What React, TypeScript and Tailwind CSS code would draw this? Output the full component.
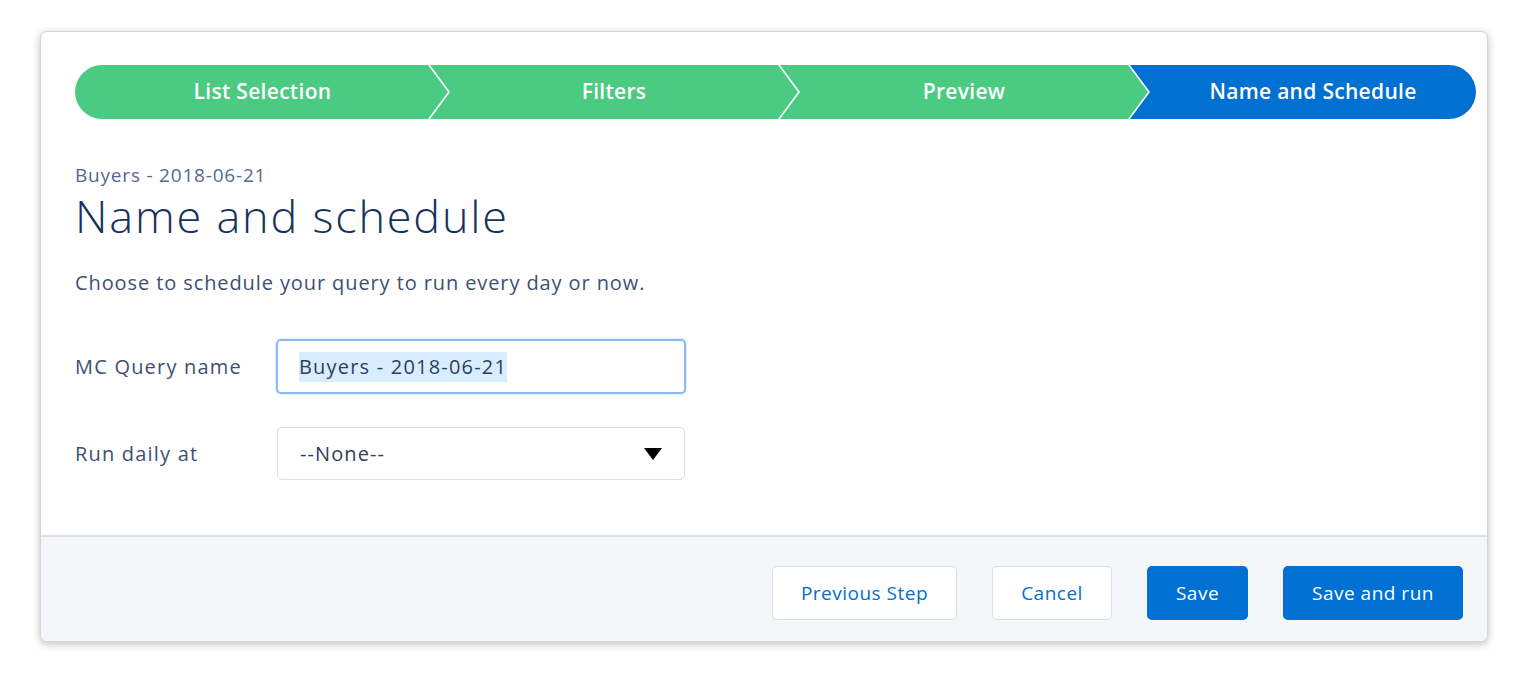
import React from "react";

const font = { fontFamily: '"Open Sans", "Noto Sans", sans-serif' };

function PathBar() {
  return (
    <div className="-mr-[23px] flex h-[54px]">
      <div className="flex h-full w-[373px] shrink-0 items-center justify-center rounded-l-[27px] bg-[#4bca81] pl-[22px] pr-[20px] text-[21px] font-semibold tracking-[0.3px] text-white [clip-path:polygon(0_0,calc(100%-20px)_0,100%_50%,calc(100%-20px)_100%,0_100%)]">
        List Selection
      </div>
      <div className="-ml-[18px] flex h-full w-[368px] shrink-0 items-center justify-center bg-[#4bca81] pl-[20px] pr-[20px] text-[21px] font-semibold tracking-[0.3px] text-white [clip-path:polygon(0_0,calc(100%-20px)_0,100%_50%,calc(100%-20px)_100%,0_100%,20px_50%)]">
        Filters
      </div>
      <div className="-ml-[18px] flex h-full w-[368px] shrink-0 items-center justify-center bg-[#4bca81] pl-[20px] pr-[20px] text-[21px] font-semibold tracking-[0.3px] text-white [clip-path:polygon(0_0,calc(100%-20px)_0,100%_50%,calc(100%-20px)_100%,0_100%,20px_50%)]">
        Preview
      </div>
      <div className="-ml-[18px] flex h-full flex-1 items-center justify-center rounded-r-[27px] bg-[#0070d2] pl-[20px] text-[21px] font-semibold tracking-[0.3px] text-white [clip-path:polygon(0_0,100%_0,100%_100%,0_100%,20px_50%)]">
        Name and Schedule
      </div>
    </div>
  );
}

export default function App() {
  return (
    <div className="min-h-[673px] w-full bg-white pl-[40px] pt-[31px]" style={font}>
      <div className="flex h-[611px] w-[1448px] flex-col overflow-hidden rounded-[7px] border border-[#d4d4d4] bg-white shadow-[0_2px_8px_rgba(0,0,0,0.25)]">
        <div className="flex-1 px-[34px] pt-[33px]">
          <PathBar />
          <div className="mt-[44px] text-[19px] leading-[24px] tracking-[0.8px] text-[#54698d]">Buyers - 2018-06-21</div>
          <h1 className="mt-[4px] text-[45px] font-light leading-[50px] tracking-[1.8px] text-[#16325c]">Name and schedule</h1>
          <p className="mt-[29px] text-[20px] leading-[26px] tracking-[0.9px] text-[#3e5071]">
            Choose to schedule your query to run every day or now.
          </p>
          <div className="mt-[43px] flex items-center">
            <label className="w-[201px] text-[20px] tracking-[1.2px] text-[#3e5071]">MC Query name</label>
            <div className="flex h-[55px] w-[410px] items-center rounded-[5px] border-2 border-[#8db9f4] bg-white px-[21px] shadow-[0_0_2px_rgba(21,137,238,0.4)]">
              <span className="bg-[#d8edff] text-[20px] leading-[30px] tracking-[1.2px] text-[#2f3f5a]">Buyers - 2018-06-21</span>
            </div>
          </div>
          <div className="mt-[33px] flex items-center">
            <label className="w-[202px] text-[20px] tracking-[1.2px] text-[#3e5071]">Run daily at</label>
            <div className="flex h-[53px] w-[408px] items-center justify-between rounded-[5px] border border-[#d8dde6] bg-white pl-[22px] pr-[22px]">
              <span className="text-[20px] tracking-[1.1px] text-[#2f3f5a]">--None--</span>
              <svg width="18" height="12" viewBox="0 0 18 12">
                <path d="M0 0 L18 0 L9 12 Z" fill="#000" />
              </svg>
            </div>
          </div>
        </div>
        <div className="flex h-[106px] items-start justify-end gap-[35px] border-t-2 border-[#dcdfe4] bg-[#f4f6f9] pr-[24px] pt-[29px]">
          <button className="h-[54px] w-[185px] rounded-[5px] border border-[#d8dde6] bg-white text-[19px] tracking-[0.5px] text-[#0070d2]">Previous Step</button>
          <button className="h-[54px] w-[120px] rounded-[5px] border border-[#d8dde6] bg-white text-[19px] tracking-[0.5px] text-[#0070d2]">Cancel</button>
          <button className="h-[54px] w-[101px] rounded-[5px] bg-[#0070d2] text-[19px] tracking-[0.5px] text-white">Save</button>
          <button className="h-[54px] w-[180px] rounded-[5px] bg-[#0070d2] text-[19px] tracking-[0.5px] text-white">Save and run</button>
        </div>
      </div>
    </div>
  );
}
